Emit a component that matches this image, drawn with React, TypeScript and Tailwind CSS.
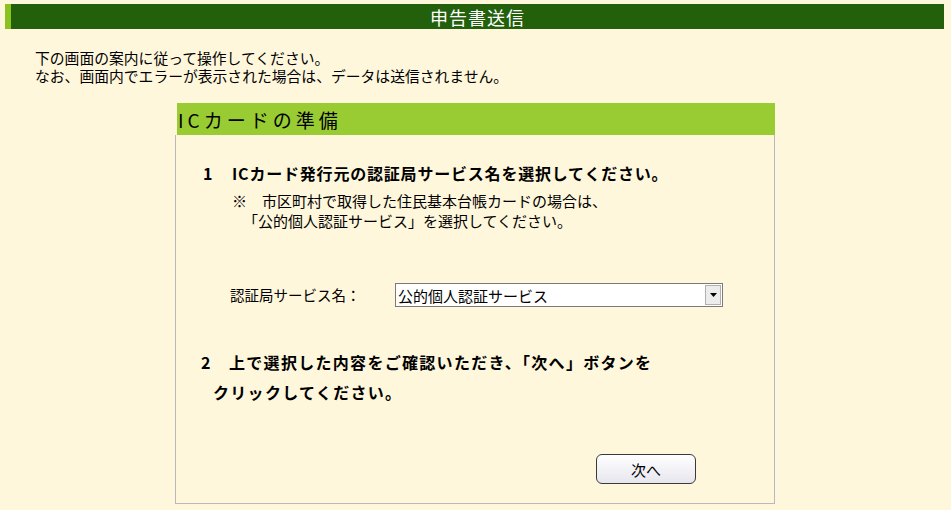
import React from 'react'

const font = "font-['Noto_Sans_CJK_JP','Noto_Sans',sans-serif]"

export default function App() {
  return (
    <div className={`min-h-screen w-full bg-[#fff7dc] text-black ${font}`}>
      {/* Title bar */}
      <div className="pt-[4px] pl-[5px] pr-[7px]">
        <div className="h-[25px] bg-[#22600c] border-l-[6px] border-[#8cc21e] flex items-center justify-center">
          <span className="text-white text-[18px] leading-none tracking-[1px]">申告書送信</span>
        </div>
      </div>

      {/* Intro */}
      <div className="pl-[35px] pt-[20px] text-[14.8px] leading-[18px]">
        <p>下の画面の案内に従って操作してください。</p>
        <p>なお、画面内でエラーが表示された場合は、データは送信されません。</p>
      </div>

      {/* Panel */}
      <div className="ml-[175px] mt-[18px] w-[600px]">
        <div className="h-[32px] bg-[#99cc33] ml-[2px] flex items-center pl-[1px]">
          <span className="text-[19px] leading-none tracking-[4px]">ICカードの準備</span>
        </div>
        <div className="border-x border-b border-[#b9b9b9] pl-[25px] pt-[26px] pb-[19px]">
          <div className="flex text-[16px] leading-[24px] font-bold">
            <span className="w-[31px] pl-[2px]">1</span>
            <span className="tracking-[0.8px]">ICカード発行元の認証局サービス名を選択してください。</span>
          </div>
          <div className="ml-[31px] mt-[6px] text-[15px] leading-[20px]">
            <div className="flex">
              <span className="w-[30px]">※</span>
              <span>市区町村で取得した住民基本台帳カードの場合は、</span>
            </div>
            <div className="pl-[11px]">「公的個人認証サービス」を選択してください。</div>
          </div>

          <div className="mt-[52px] flex items-center h-[24px] pl-[29px]">
            <span className="w-[165px] text-[14.5px] leading-none">認証局サービス名：</span>
            <div className="w-[328px] h-[24px] bg-white border border-[#7a7a7a] flex items-center">
              <span className="flex-1 pl-[2px] text-[15px] leading-none">公的個人認証サービス</span>
              <div className="w-[16px] h-[20px] mr-[1px] bg-[#ececec] border border-[#b0b0b0] flex items-center justify-center">
                <svg width="7" height="4" viewBox="0 0 7 4">
                  <path d="M0 0h7L3.5 4z" fill="#000" />
                </svg>
              </div>
            </div>
          </div>

          <div className="mt-[40px] text-[16px] leading-[30px] font-bold">
            <div className="flex">
              <span className="w-[28px]">2</span>
              <span className="tracking-[1.3px]">上で選択した内容をご確認いただき、「次へ」ボタンを</span>
            </div>
            <div className="pl-[12px] tracking-[1.3px]">クリックしてください。</div>
          </div>

          <div className="mt-[47px] ml-[395px]">
            <button className="w-[100px] h-[30px] rounded-[6px] border border-[#3a3a3a] bg-gradient-to-b from-white to-[#e6e6ee] text-[15px] leading-none">
              次へ
            </button>
          </div>
        </div>
      </div>
    </div>
  )
}
